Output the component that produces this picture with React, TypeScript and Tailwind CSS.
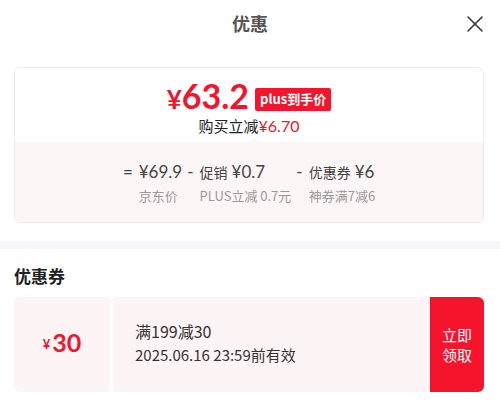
import { X } from "lucide-react";

const cjk = { fontFamily: '"Noto Sans CJK SC", "Noto Sans", sans-serif' };
const num = { fontFamily: 'Lato, "Noto Sans CJK SC", sans-serif' };

const breakdown = [
  { sign: "=", label: null, value: "¥69.9", note: "京东价" },
  { sign: "-", label: "促销", value: "¥0.7", note: "PLUS立减 0.7元" },
  { sign: "-", label: "优惠券", value: "¥6", note: "神券满7减6" },
];

export default function App() {
  return (
    <div className="w-[500px] h-[404px] bg-white overflow-hidden" style={cjk}>
      {/* header */}
      <div className="relative h-[46px] flex items-center justify-center">
        <h1 className="text-[18px] font-bold text-[#555]">优惠</h1>
        <button className="absolute right-[11px] top-[10px] text-[#333]" aria-label="close">
          <X size={28} strokeWidth={1.3} />
        </button>
      </div>

      {/* price card */}
      <div className="ml-[14px] mr-[16px] mt-[21px] rounded-md border border-[#ececec] overflow-hidden">
        <div className="pt-[13px] pb-[7px] flex flex-col items-center">
          <div className="flex items-center gap-[6px] h-[36px]">
            <span className="text-[#f2152d] font-bold leading-[36px]" style={num}>
              <span className="text-[26px]">¥</span>
              <span className="text-[34px]">63.2</span>
            </span>
            <span className="bg-[#f2152d] text-white text-[13px] font-bold rounded-[2px] px-[5px] h-[23px] flex items-center">
              plus到手价
            </span>
          </div>
          <div className="text-[15px] leading-[18px] text-[#222]">
            购买立减
            <span className="text-[#f2152d] text-[16px]" style={num}>
              ¥6.70
            </span>
          </div>
        </div>
        <div className="relative bg-[#fdf6f6] pt-[18px] pb-[16px] flex justify-center gap-[5px]">
          <span className="absolute -top-[3px] left-[237px] w-[6px] h-[6px] rotate-45 bg-[#fdf6f6]" />
          {breakdown.map((b, i) => (
            <div key={i} className="flex items-start gap-[6px]">
              <span className="text-[17px] leading-[24px] text-[#444]" style={num}>
                {b.sign}
              </span>
              <div className="flex flex-col">
                <div className="flex items-center gap-[4px] h-[24px] text-[#444]">
                  {b.label && <span className="text-[14px]">{b.label}</span>}
                  <span className="text-[17px]" style={num}>
                    {b.value}
                  </span>
                </div>
                <span className="text-[13px] leading-[20px] text-[#999] mt-[2px]">{b.note}</span>
              </div>
            </div>
          ))}
        </div>
      </div>

      {/* divider band */}
      <div className="h-[8px] bg-[#f5f6fa] mt-[18px]" />

      <h2 className="px-[14px] mt-[15px] text-[17px] leading-[24px] font-bold text-[#222]">优惠券</h2>

      {/* coupon */}
      <div className="ml-[14px] mr-[16px] mt-[9px] h-[95px] flex gap-[3px]">
        <div className="w-[96px] bg-[#fdf4f5] rounded-l-md rounded-r-[4px] flex items-center justify-center text-[#f2152d] pb-[4px]">
          <span className="text-[13px] mt-[5px] mr-[2px] font-bold" style={num}>
            ¥
          </span>
          <span className="text-[25px] font-bold leading-none" style={num}>
            30
          </span>
        </div>
        <div className="flex-1 flex rounded-l-[4px] rounded-r-md overflow-hidden">
          <div className="flex-1 bg-[#fdf4f5] pl-[22px] pb-[4px] flex flex-col justify-center text-[#333]">
            <span className="text-[16px] leading-[24px]">满199减30</span>
            <span className="text-[15px] leading-[24px]">2025.06.16 23:59前有效</span>
          </div>
          <button className="w-[54px] bg-[#f5142c] text-white text-[15px] leading-[20px] flex items-center justify-center">
            立即
            <br />
            领取
          </button>
        </div>
      </div>
    </div>
  );
}
